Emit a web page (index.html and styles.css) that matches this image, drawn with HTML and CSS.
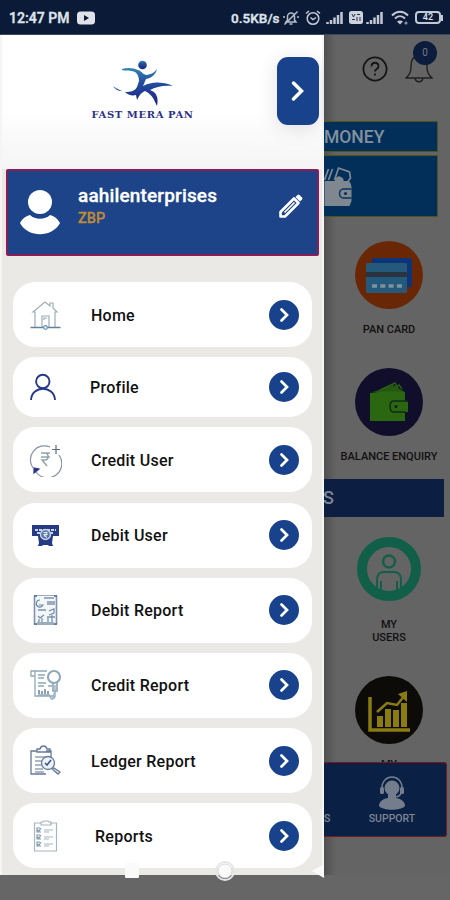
FILE: index.html
```html
<!DOCTYPE html>
<html lang="en">
<head>
    <meta charset="UTF-8">
    <meta name="viewport" content="width=device-width, initial-scale=1.0">
    <title>Fast Mera Pan</title>
    <link rel="stylesheet" href="styles.css">
</head>
<body>
    <svg width="0" height="0" class="defs">
        <defs>
            <linearGradient id="runner" x1="0" y1="0" x2="0" y2="1">
                <stop offset="0" stop-color="#3287b5"/>
                <stop offset="0.35" stop-color="#2451a0"/>
                <stop offset="1" stop-color="#1c2080"/>
            </linearGradient>
            <symbol id="arrow" viewBox="0 0 30 30">
                <circle cx="15" cy="15" r="15" fill="#19428c"/>
                <path d="M12.500 9.500l5.500 5.500-5.500 5.500" fill="none" stroke="#fff" stroke-width="2.700" stroke-linecap="round"/>
            </symbol>
            <symbol id="signal" viewBox="0 0 18 14">
                <path d="M1.500 13v-2M5 13V9M8.500 13V6.500M12 13V4M15.500 13V1" stroke="#c3c9d4" stroke-width="2.500"/>
            </symbol>
        </defs>
    </svg>
    <div class="phone">
        <div class="status-bar">
            <span class="time">12:47 PM</span>
            <svg class="youtube" width="18" height="14" viewBox="0 0 18 14"><rect y="0.500" width="18" height="13" rx="3.500" fill="#dfe2e8"/><path d="M7 4l5 3-5 3z" fill="#0b1a37"/></svg>
            <span class="speed">0.5KB/s</span>
            <svg class="mute" width="16" height="16" viewBox="0 0 16 16" fill="none" stroke="#b8bfcc" stroke-width="1.500"><path d="M3 12h10l-1.500-2V6.500a3.500 3.500 0 0 0-7 0V10zM6.500 14h3M1.500 14.500L14.500 1.500M1 8V6M15 8V6"/></svg>
            <svg class="alarm" width="16" height="16" viewBox="0 0 16 16" fill="none" stroke="#c3c9d4" stroke-width="1.500"><circle cx="8" cy="8.500" r="5.800"/><path d="M1 3.500L4 1M15 3.500L12 1M5.500 7.500L8 9.500l3-2"/></svg>
            <svg class="bars" width="18" height="14"><use href="#signal"/></svg>
            <svg class="sim" width="14" height="13" viewBox="0 0 14 13"><rect width="14" height="13" rx="2.500" fill="#cdd2dc"/><path d="M3 3l1.500 3L6 3M8 3.500h3M3 8.500h3M8 6v4M11 6v4" stroke="#26334d" fill="none"/></svg>
            <svg class="bars2" width="18" height="14"><use href="#signal"/></svg>
            <svg class="wifi" width="18" height="15" viewBox="0 0 18 15" fill="none" stroke="#c3c9d4" stroke-width="2"><path d="M1 5.500c5-5 11-5 16 0M4 8.500c3-3 7-3 10 0"/><path d="M6 11.500c2-1.500 4-1.500 6 0l-3 3z" fill="#c3c9d4" stroke="none"/><circle cx="15" cy="13" r="1.500" fill="#8e96a5" stroke="none"/></svg>
            <span class="battery">42</span>
            <span class="battery-tip"></span>
        </div>

        <div class="screen">
            <div class="drawer">
                <div class="drawer-head">
                    <div class="logo">
                        <svg width="62" height="46" viewBox="0 0 62 46" fill="url(#runner)">
                            <circle cx="29.500" cy="5" r="4.300"/>
                            <path d="M9 9c6-2 12-1 16 1 4 1 5 5 9 5 4-1 7-2 10-6-1 5-5 9-11 10l-3 7c8-4 18-5 30 0-10-1-17 1-23 4 6 2 9 7 7 16-3-6-4-11-12-15-3 1-6 4-8 9l-1-5c-4 1-8 0-11-3 6 0 10-1 12-5l2-6c0-6-3-10-8-10-3-1-6 0-9-1z"/>
                            <path d="M0 26c2 3 5 5 9 5-3-1-6-3-9-5z"/>
                        </svg>
                        <div class="logo-text">FAST MERA PAN</div>
                    </div>
                    <div class="toggle">
                        <svg width="16" height="24" viewBox="0 0 16 24"><path d="M3.500 4l8 8-8 8" fill="none" stroke="#fff" stroke-width="3.500" stroke-linecap="round"/></svg>
                    </div>
                </div>

                <div class="user-card">
                    <svg width="42" height="48" viewBox="0 0 42 48" fill="#fff"><circle cx="21" cy="13" r="12"/><path d="M1 34c3-5 6-7 10-8 5 5 15 5 20 0 4 1 7 3 10 8-8 15-32 15-40 0z"/></svg>
                    <div class="user-info">
                        <div class="user-name">aahilenterprises</div>
                        <div class="user-type">ZBP</div>
                    </div>
                    <svg class="pencil" width="26" height="26" viewBox="0 0 26 26"><path d="M2.500 23.500V19L16 5.500l4.500 4.500L7 23.500z" fill="none" stroke="#fff" stroke-width="2.600" stroke-linejoin="round"/><path d="M6.500 19.500L16.500 9.500" stroke="#fff" stroke-width="1.600"/><path d="M17.500 4l2-2q1-1 2 0l2.500 2.500q1 1 0 2l-2 2z" fill="#fff"/></svg>
                </div>

                <div class="menu">
                    <div class="menu-item">
                        <svg class="icon" viewBox="0 0 34 34" fill="none" stroke="#9baeb9" stroke-width="1.200"><path d="M7 30V14H5L17 4l5 4V5h3v5l4 4h-2v16M14 29V18h7v11M16 22v-2h3"/><path d="M2.500 29.500h30" stroke="#64809b" stroke-width="1.500"/><circle cx="17.500" cy="29.500" r="1.800" fill="#fff" stroke="#6294b5"/></svg>
                        <span class="label">Home</span>
                        <svg class="go"><use href="#arrow"/></svg>
                    </div>
                    <div class="menu-item short">
                        <svg class="icon" viewBox="0 0 34 34" fill="none" stroke="#26388a" stroke-width="1.900"><circle cx="14.800" cy="11.500" r="6.700"/><path d="M3 30c1-15 23-15 24 0"/></svg>
                        <span class="label profile">Profile</span>
                        <svg class="go"><use href="#arrow"/></svg>
                    </div>
                    <div class="menu-item">
                        <svg class="icon" viewBox="0 0 34 34" fill="none" stroke="#8791aa" stroke-width="1.200"><path d="M22 4A14 14 0 0 0 5 25M8 29A14 14 0 0 0 31 12"/><path d="M28 2v9M24 6.500h8" stroke="#5d688c"/><path d="M6 25v5l5-4z" fill="#27348a" stroke="#27348a"/><path d="M13 10h9M13 14h9M13 10h4c4 0 4 7 0 7h-3l5 6" stroke="#93a5aa" stroke-width="1.500"/></svg>
                        <span class="label">Credit User</span>
                        <svg class="go"><use href="#arrow"/></svg>
                    </div>
                    <div class="menu-item">
                        <svg class="icon" viewBox="0 0 34 34"><path d="M4 7h27v11h-6l-1 7 1 3h-4l-1-1h-5l-1 1h-4l1-3-1-7H4z" fill="#253b86"/><path d="M7 12h21M9 15h4M22 15h4" stroke="#c9d5e6" stroke-width="1.800" stroke-dasharray="3 1"/><circle cx="17.500" cy="16.500" r="5" fill="#5b78a6" stroke="#c9d5e6" stroke-width="1.300"/><path d="M15.500 14.500h4M15.500 16.500h4M16 14.500c4 0 4 3 0 3l3 2" fill="none" stroke="#e8eef5"/></svg>
                        <span class="label">Debit User</span>
                        <svg class="go"><use href="#arrow"/></svg>
                    </div>
                    <div class="menu-item">
                        <svg class="icon" viewBox="0 0 34 34" fill="none" stroke="#9aadbd" stroke-width="1.200"><path d="M6.500 2.500h22v29h-22z" fill="#f3f7f9"/><path d="M6.500 3v28M28.500 3v28" stroke="#8293ab" stroke-width="1.500"/><path d="M16 5h10M19 9h8M19 11h8M10 17h8M19 24h8M9 30h17" stroke-width="2"/><path d="M12 7a3.500 3.500 0 1 0 3 5h-4M21 18l5-2v4l-5 2M10 23l2 2 4-3M11 29v-3M14 29v-4M20 29v-4M24 29v-7" stroke="#708aa4"/><path d="M6 3h3M26 3h3M6 31h3M26 31h3" stroke="#526c94" stroke-width="1.600"/></svg>
                        <span class="label">Debit Report</span>
                        <svg class="go"><use href="#arrow"/></svg>
                    </div>
                    <div class="menu-item">
                        <svg class="icon" viewBox="0 0 34 34" fill="none" stroke="#91a8b9" stroke-width="1.300"><path d="M7 8H3V3h16M7 3v25h20V17M27 28c0 4-5 3-5 0"/><circle cx="26" cy="9" r="6" stroke-width="2.200"/><path d="M25 15v8h4v-9M10 7h7M10 10h6M10 15h8M10 18h6M20 18h4M10 27h12" stroke-width="1.700"/><path d="M11 26v-4M14 26v-3M17 26v-5M20 26v-3" stroke="#6580a0" stroke-width="1.500"/><path d="M27 24l-3 8" stroke="#a4bbc9" stroke-width="2"/></svg>
                        <span class="label">Credit Report</span>
                        <svg class="go"><use href="#arrow"/></svg>
                    </div>
                    <div class="menu-item">
                        <svg class="icon" viewBox="0 0 34 34" fill="none" stroke="#657a99" stroke-width="1.300"><path d="M18 30H3V7h6M18 7h5v7M9 8V5h3c1-4 6-4 7 0h3v3z"/><path d="M7 13h10M7 17h7M7 21h6M7 25h8M7 28h9" stroke="#92a1b3"/><circle cx="20" cy="19" r="6.500" fill="#edf3f8"/><path d="M17 19l2 2 4-5" stroke="#3b5598" stroke-width="1.600"/><path d="M24 25l2-1 6 4-2 2z" fill="#dce6ef"/></svg>
                        <span class="label">Ledger Report</span>
                        <svg class="go"><use href="#arrow"/></svg>
                    </div>
                    <div class="menu-item">
                        <svg class="icon" viewBox="0 0 34 34" fill="none" stroke="#a7b6bf" stroke-width="1.200"><path d="M13 4H6.500v28h22V4H22M13 6V3h2l1-1h4l1 1h2v3z"/><path d="M16 11h9M16 18h9M16 25h9M16 13h5M16 20h5M16 27h5"/><path d="M12 9H9v4h4M9 11l2 1 2-3M12 16H9v4h4M9 18l2 1 2-3M12 23H9v4h4M9 25l2 1 2-3" stroke="#8098aa"/></svg>
                        <span class="label reports">Reports</span>
                        <svg class="go"><use href="#arrow"/></svg>
                    </div>
                </div>
            </div>

            <div class="page">
                <div class="top-icons">
                    <svg width="26" height="26" viewBox="0 0 26 26" fill="none" stroke="#151515"><circle cx="13" cy="13" r="11.600" stroke-width="1.800"/><path d="M9.500 10.500c0-5 7-5 7 0 0 2.500-3.500 2.500-3.500 5M13 17.500v2" stroke-width="1.800"/></svg>
                    <div class="bell">
                        <svg width="28" height="32" viewBox="0 0 28 32" fill="none" stroke="#202020" stroke-width="1.400"><path d="M1 26c4-4 5-6 5-12 0-7 3-10 8-10s8 3 8 10c0 6 1 8 5 12zM10 26c1 5 7 5 8 0"/></svg>
                        <span class="badge">0</span>
                    </div>
                </div>
                <div class="banner money">MONEY</div>
                <div class="banner wallet">
                    <svg width="30" height="42" viewBox="0 0 29 42"><path d="M0 14l4-11M4 14L8 3M10 14l4-12 11 4 1 6-3 4" fill="none" stroke="#7f8890" stroke-width="1.700"/><path d="M11 12q4-4 8 1v3h-9z" fill="#7f8890"/><path d="M0 15h24q3 2 3 7v13l-2 5H0z" fill="#7f8890"/><path d="M27 23H18q-3 1-3 4.500t3 4.500h9" fill="none" stroke="#0a315d" stroke-width="1.300"/><circle cx="21" cy="27.500" r="1.600" fill="#0a315d"/></svg>
                </div>
                <div class="tile pan">
                    <svg width="68" height="68" viewBox="0 0 68 68"><circle cx="34" cy="34" r="34" fill="#6a2706"/><rect x="17" y="17" width="40" height="29" rx="2" fill="#0c3477"/><rect x="11" y="22" width="41" height="30" rx="1.500" fill="#24597b"/><path d="M11 33.500h41" stroke="#293440" stroke-width="5"/><path d="M17 45h30" stroke="#7d939d" stroke-width="3.500" stroke-dasharray="5 3.300"/></svg>
                    <span>PAN CARD</span>
                </div>
                <div class="tile balance">
                    <svg width="68" height="68" viewBox="0 0 68 68"><circle cx="34" cy="34" r="34" fill="#100e2b"/><path d="M18 24l20-7 12 7" fill="#245711"/><path d="M25 22l15-7 3 5M37 22l7-5 3 4" fill="none" stroke="#285f13" stroke-width="1.500"/><path d="M15 25q17-3 35-1v10h3v10h-3v9H15z" fill="#2b6710"/><path d="M53 33H38q-3 1-3 5.500t3 5.500h12" fill="none" stroke="#122b18" stroke-width="1.500"/><circle cx="41" cy="38.500" r="1.500" fill="#111b22"/></svg>
                    <span>BALANCE ENQUIRY</span>
                </div>
                <div class="band">S</div>
                <div class="tile users">
                    <svg width="68" height="68" viewBox="0 0 68 68" fill="none" stroke="#125f49"><circle cx="34" cy="33" r="27" stroke-width="10"/><circle cx="34" cy="25.500" r="6" stroke-width="2.400"/><path d="M22 52v-8q0-8 7-8h10q7 0 7 8v8M26 54v-9M42 54v-9" stroke-width="2"/></svg>
                    <span>MY<br>USERS</span>
                </div>
                <div class="tile chart">
                    <svg width="68" height="68" viewBox="0 0 68 68"><circle cx="34" cy="34" r="34" fill="#0c0b08"/><g fill="none" stroke="#8a7c12"><path d="M15 21v33h40" stroke-width="3.500"/><path d="M25 51V40M33 51V33M41 51V34M49 51V27" stroke-width="6"/><path d="M22 36l10-9 10 2 8-10" stroke-width="2.500"/></g><path d="M43 18l9-3v11z" fill="#8a7c12"/></svg>
                    <span>MY</span>
                </div>
                <div class="bottom-bar">
                    <span class="cut">S</span>
                    <div class="support">
                        <svg width="26" height="34" viewBox="0 0 26 34"><path d="M3 13C2-3 24-3 23 13M22 17q-1 4-7 4" fill="none" stroke="#747d8b" stroke-width="1.500"/><rect x="1" y="11" width="4" height="7" rx="1.500" fill="#747d8b"/><rect x="21" y="11" width="4" height="7" rx="1.500" fill="#747d8b"/><circle cx="13" cy="12" r="7.500" fill="#747d8b"/><path d="M9 17h8v5c6 1 9 4 9 8-4 5-22 5-26 0 0-4 3-7 9-8z" fill="#747d8b"/></svg>
                        <span>SUPPORT</span>
                    </div>
                </div>
            </div>
        </div>

        <div class="system-nav">
            <svg width="14" height="16" viewBox="0 0 14 16"><rect width="14" height="15" rx="1" fill="#fafafa"/></svg>
            <svg width="22" height="22" viewBox="0 0 22 22"><circle cx="11" cy="11" r="9" fill="none" stroke="#e6e6e6" stroke-width="2"/><circle cx="11" cy="11" r="7" fill="#fafafa" stroke="#cfcfcf" stroke-width="0.800"/></svg>
            <svg width="14" height="16" viewBox="0 0 14 16"><path d="M13 1v14L1 8z" fill="#fafafa"/></svg>
        </div>
    </div>
</body>
</html>
```
FILE: styles.css
```css
* {
    box-sizing: border-box;
}
body {
    margin: 0;
    font-family: Roboto, Arial, sans-serif;
    background-color: #666;
}
svg {
    display: block;
    flex: none;
}
.defs {
    position: absolute;
}
.phone {
    position: relative;
    width: 450px;
    height: 900px;
    overflow: hidden;
}
.status-bar {
    display: flex;
    align-items: center;
    height: 35px;
    padding: 1px 6px 0 9px;
    background-color: #0b1a37;
    border-bottom: 1px solid #3e4859;
    color: #dfe2e8;
    font-weight: 600;
}
.time {
    width: 68px;
    font-size: 14px;
    white-space: nowrap;
    -webkit-text-stroke: 0.3px #dfe2e8;
}
.speed {
    width: 51px;
    margin-left: 136px;
    font-size: 13.5px;
    -webkit-text-stroke: 0.3px #dfe2e8;
}
.mute {
    margin-left: 1px;
}
.alarm {
    margin-left: 6px;
}
.bars {
    margin-left: 5px;
}
.sim {
    margin-left: 5px;
}
.bars2 {
    margin-left: 3px;
}
.wifi {
    margin-left: 7px;
}
.battery {
    width: 26px;
    height: 13px;
    margin-left: 6px;
    border: 2px solid #c3c9d4;
    border-radius: 4px;
    font-size: 9px;
    line-height: 9px;
    text-align: center;
}
.battery-tip {
    width: 2px;
    height: 6px;
    background-color: #c3c9d4;
}
.screen {
    display: flex;
    height: 840px;
}
.drawer {
    width: 324px;
    background-color: #ebe9e6;
    border-left: 2px solid #f6f5f3;
    border-right: 2px solid #f5f5f5;
    flex: none;
}
.drawer-head {
    display: flex;
    height: 134px;
    background: linear-gradient(#fff 55%, #f4f4f4);
}
.logo {
    width: 104px;
    margin: 25px 0 0 88px;
    text-align: center;
}
.logo svg {
    margin-left: 23px;
}
.logo-text {
    margin: 1px 0 0 1px;
    font-family: "DejaVu Serif", serif;
    font-size: 10px;
    font-weight: bold;
    line-height: 15px;
    letter-spacing: 0.6px;
    white-space: nowrap;
    color: #2b3188;
}
.toggle {
    display: flex;
    align-items: center;
    justify-content: center;
    width: 42px;
    height: 68px;
    margin: 22px 0 0 83px;
    border-radius: 11px;
    background-color: #19428c;
    box-shadow: 0 3px 20px rgba(0, 0, 0, 0.12);
}
.user-card {
    display: flex;
    width: 313px;
    height: 87px;
    margin-left: 4px;
    padding: 18px 0 0 11px;
    border: 2px solid #8a1c57;
    border-radius: 2px;
    background-color: #1d4488;
}
.user-info {
    width: 200px;
    margin-left: 17px;
    margin-top: -5px;
}
.user-name {
    color: #fff;
    font-size: 19px;
    font-weight: 500;
    line-height: 23px;
    letter-spacing: 0.15px;
    -webkit-text-stroke: 0.3px #fff;
}
.user-type {
    color: #bd8b3a;
    font-size: 14.5px;
    font-weight: 500;
    line-height: 24px;
    -webkit-text-stroke: 0.3px #bd8b3a;
}
.pencil {
    margin-top: 4px;
}
.menu {
    display: flex;
    flex-direction: column;
    gap: 10.200px;
    padding: 26px 10px 0 11px;
}
.menu-item {
    display: flex;
    align-items: center;
    height: 65px;
    flex: none;
    padding: 0 13px 0 15px;
    border-radius: 22px;
    background-color: #fff;
}
.menu-item.short {
    height: 60px;
}
.icon {
    width: 34px;
    height: 34px;
}
.label {
    flex: 1;
    margin-left: 29px;
    padding-top: 1px;
    font-size: 16px;
    font-weight: 500;
    letter-spacing: 0.25px;
    color: #111;
}
.label.profile {
    margin-left: 28px;
}
.label.reports {
    margin-left: 33px;
}
.go {
    width: 30px;
    height: 30px;
}
.page {
    flex: 1;
    min-width: 0;
    overflow: hidden;
    background: linear-gradient(to right, #505050, #646464 12px);
}
.top-icons {
    display: flex;
    height: 86px;
    padding: 21px 0 0 38px;
}
.bell {
    position: relative;
    margin: -4px 0 0 17px;
}
.badge {
    position: absolute;
    left: 8px;
    top: -11px;
    width: 24px;
    height: 24px;
    border-radius: 50%;
    background-color: #0b1c3c;
    color: #747b87;
    font-size: 10px;
    line-height: 24px;
    text-align: center;
}
.banner {
    width: 114px;
    border: 1px solid #4f541e;
    border-left: none;
    background-color: #022f59;
}
.money {
    height: 31px;
    color: #85909b;
    font-size: 17.5px;
    font-weight: 500;
    line-height: 30px;
}
.wallet {
    height: 62px;
    margin-top: 3px;
    padding-top: 10px;
}
.tile {
    display: flex;
    flex-direction: column;
    align-items: center;
    width: 130px;
    color: #111;
    font-size: 11px;
    font-weight: 500;
    line-height: 13px;
    text-align: center;
    white-space: nowrap;
}
.pan {
    height: 127px;
    margin-top: 24px;
}
.tile span {
    margin-top: 14px;
}
.balance {
    height: 111px;
}
.band {
    width: 120px;
    height: 38px;
    background-color: #0c1f42;
    color: #7d8592;
    font-size: 18px;
    font-weight: 500;
    line-height: 38px;
    text-indent: -1px;
}
.users {
    height: 140px;
    margin-top: 19px;
}
.chart {
    height: 86px;
    overflow: hidden;
}
.bottom-bar {
    display: flex;
    width: 123px;
    height: 75px;
    border: 1px solid #741820;
    border-left: none;
    border-radius: 0 3px 3px 0;
    background-color: #0b2045;
    color: #7d8592;
    font-size: 10.5px;
    font-weight: 500;
}
.cut {
    width: 6px;
    margin-top: 49px;
}
.support {
    display: flex;
    flex-direction: column;
    align-items: center;
    width: 124px;
    flex: none;
    padding-top: 13px;
}
.support span {
    margin-top: 2px;
}
.system-nav {
    position: absolute;
    left: 125px;
    top: 860px;
    display: flex;
    align-items: center;
    justify-content: space-between;
    width: 200px;
    height: 22px;
}
```
